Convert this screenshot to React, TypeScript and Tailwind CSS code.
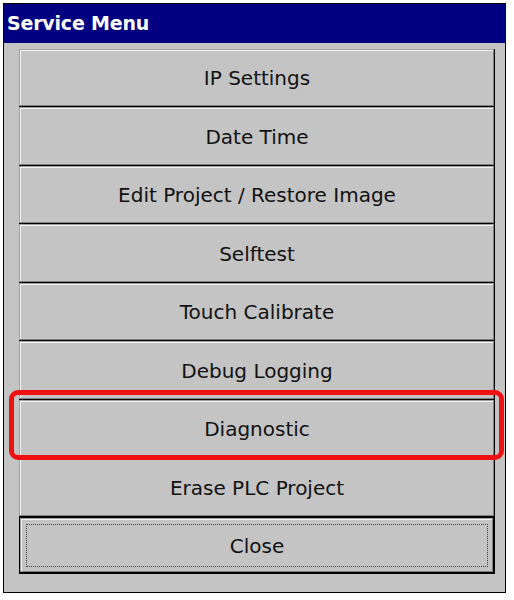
const items = [
  "IP Settings",
  "Date Time",
  "Edit Project / Restore Image",
  "Selftest",
  "Touch Calibrate",
  "Debug Logging",
  "Diagnostic",
  "Erase PLC Project",
];

const bevel =
  "shadow-[inset_-1px_-1px_0_#000,inset_1px_1px_0_#a0a0a0,inset_-2px_-2px_0_#808080,inset_2px_2px_0_#f4f4f4]";

function MenuButton({ label, tall }: { label: string; tall: boolean }) {
  return (
    <div
      className={`${tall ? "h-[59px]" : "h-[58px]"} flex items-center justify-center text-[20px] text-[#111] bg-[#c4c4c4] ${bevel}`}
    >
      {label}
    </div>
  );
}

export default function App() {
  return (
    <div
      className="relative w-[514px] h-[600px] bg-white"
      style={{ fontFamily: '"DejaVu Sans", "Liberation Sans", sans-serif' }}
    >
      <div className="absolute left-[3px] top-[3px] w-[503px] h-[590px] border border-black bg-[#c4c4c4] flex flex-col">
        <div className="h-[39px] shrink-0 bg-[#000080] text-white font-bold text-[19px] pl-[3px] flex items-center tracking-[-0.2px]">
          Service Menu
        </div>
        <div className="flex flex-col pl-[15px] pr-[10px] pt-[6px]">
          {items.map((label, i) => (
            <MenuButton key={label} label={label} tall={i % 2 === 1} />
          ))}
          <div
            className={`h-[57px] p-[6px] flex border border-black bg-[#c4c4c4] ${bevel}`}
          >
            <div className="flex-1 flex items-center justify-center border border-dotted border-[#404040] text-[20px] text-[#111]">
              Close
            </div>
          </div>
        </div>
      </div>

      {/* highlight around Diagnostic */}
      <div className="absolute left-[9px] top-[390px] w-[495px] h-[70px] rounded-[9px] border-[5px] border-[#ee1111]" />
    </div>
  );
}
